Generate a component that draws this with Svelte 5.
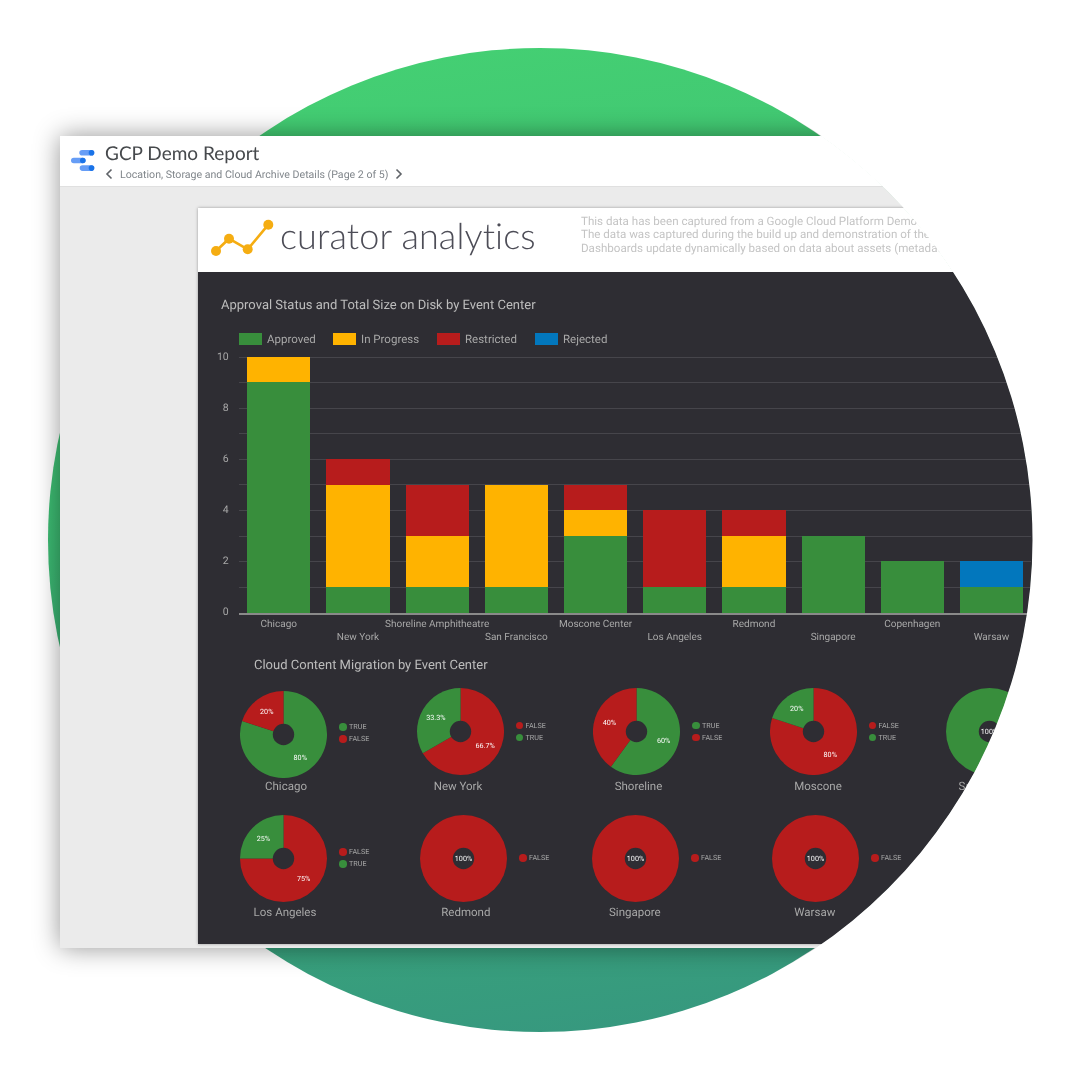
<script>
  const legend = [
    { name: 'Approved', color: '#388e3c', width: 94 },
    { name: 'In Progress', color: '#ffb300', width: 104 },
    { name: 'Restricted', color: '#b71c1c', width: 98 },
    { name: 'Rejected', color: '#0277bd', width: 80 }
  ];

  const colors = { a: '#388e3c', p: '#ffb300', r: '#b71c1c', x: '#0277bd' };

  const bars = [
    { name: 'Chicago', parts: [['a', 9], ['p', 1]] },
    { name: 'New York', parts: [['a', 1], ['p', 4], ['r', 1]] },
    { name: 'Shoreline Amphitheatre', parts: [['a', 1], ['p', 2], ['r', 2]] },
    { name: 'San Francisco', parts: [['a', 1], ['p', 4]] },
    { name: 'Moscone Center', parts: [['a', 3], ['p', 1], ['r', 1]] },
    { name: 'Los Angeles', parts: [['a', 1], ['r', 3]] },
    { name: 'Redmond', parts: [['a', 1], ['p', 2], ['r', 1]] },
    { name: 'Singapore', parts: [['a', 3]] },
    { name: 'Copenhagen', parts: [['a', 2]] },
    { name: 'Warsaw', parts: [['a', 1], ['x', 1]] }
  ];

  const ticks = [10, 8, 6, 4, 2, 0];
  const grid = [1, 2, 3, 4, 5, 6, 7, 8, 9, 10];

  const G = '#388e3c';
  const R = '#b71c1c';

  // each slice: [colour, percent, label, legend name]; dx shifts the caption under the pie
  const rows = [
    [
      { name: 'Chicago', w: 176.5, top: 3, dx: 2.5, slices: [[G, 80, '80%', 'TRUE'], [R, 20, '20%', 'FALSE']] },
      { name: 'New York', w: 176.5, top: 0, dx: -2, slices: [[R, 66.7, '66.7%', 'FALSE'], [G, 33.3, '33.3%', 'TRUE']] },
      { name: 'Shoreline', w: 176.5, top: 0, dx: 2, slices: [[G, 60, '60%', 'TRUE'], [R, 40, '40%', 'FALSE']] },
      { name: 'Moscone', w: 176.5, top: 0, dx: 5, slices: [[R, 80, '80%', 'FALSE'], [G, 20, '20%', 'TRUE']] },
      { name: 'San Francisco', w: 176.5, top: 0, dx: 5, slices: [[G, 100, '100%', 'TRUE']] }
    ],
    [
      { name: 'Los Angeles', w: 180, top: 0, dx: 1.5, slices: [[R, 75, '75%', 'FALSE'], [G, 25, '25%', 'TRUE']] },
      { name: 'Redmond', w: 172, top: 0, dx: 2.3, slices: [[R, 100, '100%', 'FALSE']] },
      { name: 'Singapore', w: 180, top: 0, dx: -0.7, slices: [[R, 100, '100%', 'FALSE']] },
      { name: 'Warsaw', w: 176, top: 0, dx: -0.7, slices: [[R, 100, '100%', 'FALSE']] }
    ]
  ];

  const radius = 43.5;
  const labelRadius = 28.5;

  function point(r, pct) {
    const a = (pct / 100) * Math.PI * 2;
    return [radius + r * Math.sin(a), radius - r * Math.cos(a)];
  }

  function arcs(slices) {
    let from = 0;
    return slices.map(([color, pct, label]) => {
      const [x0, y0] = point(radius, from);
      const [x1, y1] = point(radius, from + pct);
      const mid = pct === 100 ? null : point(labelRadius, from + pct / 2);
      const large = pct > 50 ? 1 : 0;
      const d = `M${radius} ${radius}L${x0} ${y0}A${radius} ${radius} 0 ${large} 1 ${x1} ${y1}Z`;
      from += pct;
      return { color, d, label, full: pct === 100, x: mid ? mid[0] : radius, y: mid ? mid[1] : radius };
    });
  }
</script>

<div class="stage">
  <div class="circle"></div>

  <div class="clip">
    <div class="window">
      <header class="top">
        <svg class="logo" width="24" height="24" viewBox="0 0 24 24">
          <rect x="8.3" y="1" width="15" height="5.6" rx="2.8" fill="#669df6" />
          <circle cx="20.5" cy="3.8" r="2.8" fill="#1a73e8" />
          <rect x="0" y="8.7" width="14.6" height="5.6" rx="2.8" fill="#669df6" />
          <circle cx="11.8" cy="11.5" r="2.8" fill="#1a73e8" />
          <rect x="8.7" y="16.3" width="14.6" height="5.6" rx="2.8" fill="#669df6" />
          <circle cx="20.5" cy="19.1" r="2.8" fill="#1a73e8" />
        </svg>
        <div class="heading">
          <h1>GCP Demo Report</h1>
          <div class="pager">
            <svg width="8" height="12" viewBox="0 0 8 12"><path d="M6.5 1.5 2 6l4.5 4.5" /></svg>
            <span>Location, Storage and Cloud Archive Details (Page 2 of 5)</span>
            <svg width="8" height="12" viewBox="0 0 8 12"><path d="M1.5 1.5 6 6l-4.5 4.5" /></svg>
          </div>
        </div>
      </header>

      <div class="canvas">
        <div class="page">
          <div class="brand">
            <svg class="spark" width="66" height="42" viewBox="0 0 66 42">
              <path d="M7 33 20 20.7 38.7 31.3 59.3 6.7" />
              <circle cx="7" cy="33" r="5" />
              <circle cx="20" cy="20.7" r="5" />
              <circle cx="38.7" cy="31.3" r="5" />
              <circle cx="59.3" cy="6.7" r="5" />
            </svg>
            <div class="wordmark">curator analytics</div>
            <div class="about">
              <div>This data has been captured from a Google Cloud Platform Demo instance.</div>
              <div>The data was captured during the build up and demonstration of the platform.</div>
              <div>Dashboards update dynamically based on data about assets (metadata).</div>
            </div>
          </div>

          <div class="dark">
            <h2 class="chart-title">Approval Status and Total Size on Disk by Event Center</h2>

            <div class="legend">
              {#each legend as item}
                <div class="legend-item" style="width: {item.width}px">
                  <span class="swatch" style="background: {item.color}"></span>
                  <span>{item.name}</span>
                </div>
              {/each}
            </div>

            <div class="chart">
              <div class="axis">
                {#each ticks as t}
                  <span>{t}</span>
                {/each}
              </div>
              <div class="plot">
                <div class="grid">
                  {#each grid as line}
                    <span></span>
                  {/each}
                </div>
                <div class="bars">
                  {#each bars as bar}
                    <div class="band">
                      {#each bar.parts as [key, value]}
                        <div class="part" style="height: {value * 25.6}px; background: {colors[key]}"></div>
                      {/each}
                    </div>
                  {/each}
                </div>
              </div>
            </div>

            <div class="names">
              {#each bars as bar, i}
                <div class="name" class:low={i % 2 === 1}>{bar.name}</div>
              {/each}
            </div>

            <h2 class="pies-title">Cloud Content Migration by Event Center</h2>

            {#each rows as row, r}
              <div class="pie-row" class:second={r === 1}>
                {#each row as tile}
                  <div class="tile" style="width: {tile.w}px">
                    <div class="pie-line">
                      <div class="pie-wrap" style="margin-top: {tile.top}px">
                        <svg width="87" height="87" viewBox="0 0 87 87">
                          {#each arcs(tile.slices) as s}
                            {#if s.full}
                              <circle cx="43.5" cy="43.5" r="43.5" fill={s.color} />
                            {:else}
                              <path d={s.d} fill={s.color} />
                            {/if}
                          {/each}
                          <circle cx="43.5" cy="43.5" r="10.7" fill="#2e2d33" />
                          {#each arcs(tile.slices) as s}
                            <text x={s.x} y={s.y + 2.6}>{s.label}</text>
                          {/each}
                        </svg>
                      </div>
                      <div class="pie-legend" style="margin-top: {tile.top}px">
                        {#each tile.slices as s}
                          <div class="pie-key">
                            <span class="dot" style="background: {s[0]}"></span>
                            <span>{s[3]}</span>
                          </div>
                        {/each}
                      </div>
                    </div>
                    <div class="caption" style="margin-left: {tile.dx}px">{tile.name}</div>
                  </div>
                {/each}
              </div>
            {/each}
          </div>
        </div>
      </div>
    </div>
  </div>
</div>

<style>
  :global(body) {
    margin: 0;
    background: #fff;
  }

  h1,
  h2 {
    margin: 0;
    font-weight: 400;
  }

  .stage {
    position: relative;
    width: 1080px;
    height: 1080px;
    overflow: hidden;
    background: #fff;
    font-family: Roboto, sans-serif;
    text-rendering: geometricPrecision;
  }

  .circle {
    position: absolute;
    left: 48px;
    top: 48px;
    width: 984px;
    height: 984px;
    border-radius: 50%;
    background: linear-gradient(172deg, #45d273 0%, #3cb972 45%, #369580 100%);
  }

  /* window is cut by the circle on its right half, free on the left */
  .clip {
    position: absolute;
    inset: 0;
    padding: 136px 0 0 60px;
    box-sizing: border-box;
    clip-path: path('M0 0H540V47.5A492.5 492.5 0 0 1 540 1032.5V1080H0Z');
  }

  .window {
    width: 1100px;
    height: 812px;
    display: flex;
    flex-direction: column;
    background: #ebebeb;
    box-shadow: 0 0 24px rgba(0, 0, 0, 0.42);
    filter: blur(0.35px);
  }

  .top {
    height: 51px;
    flex: none;
    box-sizing: border-box;
    display: flex;
    align-items: flex-start;
    padding: 0 0 0 11px;
    background: #fff;
    border-bottom: 1px solid #e0e0e0;
  }

  .logo {
    margin-top: 13px;
    flex: none;
  }

  .heading {
    margin-left: 10px;
    padding-top: 6px;
  }

  h1 {
    font-family: Lato, sans-serif;
    font-size: 19px;
    line-height: 24px;
    color: #46494c;
  }

  .pager {
    display: flex;
    align-items: center;
    gap: 7px;
    height: 16px;
    font-size: 10.6px;
    color: #80868b;
    white-space: nowrap;
  }

  .pager path {
    fill: none;
    stroke: #5f6368;
    stroke-width: 1.6;
  }

  .canvas {
    flex: 1;
    padding: 21px 0 0 138px;
  }

  .page {
    width: 962px;
    height: 736px;
    display: flex;
    flex-direction: column;
    box-shadow: 0 0 3px rgba(0, 0, 0, 0.35);
  }

  .brand {
    height: 64px;
    flex: none;
    display: flex;
    background: #fff;
    white-space: nowrap;
  }

  .spark {
    margin: 10px 0 0 11px;
    flex: none;
  }

  .spark path {
    fill: none;
    stroke: #f5ad12;
    stroke-width: 2.6;
  }

  .spark circle {
    fill: #f5ad12;
  }

  .wordmark {
    margin: 3px 0 0 5px;
    width: 301px;
    font-family: Lato, sans-serif;
    font-weight: 300;
    font-size: 36px;
    letter-spacing: 0.12px;
    line-height: 48px;
    color: #4d4d57;
  }

  .about {
    padding-top: 6.5px;
    font-size: 11.6px;
    line-height: 13.7px;
    color: #c4c4c4;
  }

  .dark {
    flex: 1;
    background: #2e2d33;
    padding: 0 0 0 23px;
  }

  .chart-title {
    padding-top: 26px;
    font-size: 13px;
    line-height: 15px;
    color: #bdbdbd;
  }

  .legend {
    display: flex;
    height: 16px;
    margin: 18px 0 0 18px;
    font-size: 11.5px;
    color: #a8a8a8;
  }

  .legend-item {
    display: flex;
    align-items: center;
    gap: 5px;
  }

  .swatch {
    width: 23px;
    height: 12px;
  }

  .chart {
    display: flex;
    margin-top: 9.5px;
  }

  .axis {
    width: 18.2px;
    height: 268px;
    box-sizing: border-box;
    display: flex;
    flex-direction: column;
    align-items: flex-end;
    justify-content: space-between;
    margin: -6px 0;
    padding-right: 10.5px;
    font-size: 10.5px;
    line-height: 12px;
    color: #a8a8a8;
  }

  .plot {
    position: relative;
    width: 792px;
    height: 256px;
    border-bottom: 2px solid #8a8a8a;
    box-sizing: content-box;
  }

  .grid {
    position: absolute;
    inset: 0 0 0 -0.2px;
    display: flex;
    flex-direction: column;
  }

  .grid span {
    height: 25.6px;
    box-sizing: border-box;
    border-top: 1px solid #46454b;
  }

  .bars {
    position: relative;
    display: flex;
    height: 100%;
  }

  .band {
    width: 79.2px;
    box-sizing: border-box;
    padding: 0 8px;
    display: flex;
    flex-direction: column-reverse;
  }

  .names {
    display: flex;
    height: 30px;
    margin: 3.5px 0 0 18.2px;
  }

  .name {
    width: 79.2px;
    flex: none;
    display: flex;
    justify-content: center;
    font-size: 10px;
    line-height: 13px;
    color: #a8a8a8;
    white-space: nowrap;
  }

  .name.low {
    padding-top: 13px;
  }

  .pies-title {
    margin: 10px 0 0 33px;
    font-size: 13px;
    line-height: 16px;
    color: #bdbdbd;
  }

  .pie-row {
    display: flex;
    margin: 14px 0 0 19px;
    height: 100px;
  }

  .pie-row.second {
    margin-top: 26.7px;
  }

  .tile {
    flex: none;
  }

  .pie-line {
    display: flex;
    height: 87px;
  }

  .pie-wrap {
    width: 87px;
    height: 87px;
    flex: none;
  }

  .pie-wrap text {
    fill: #fff;
    font-size: 7.2px;
    text-anchor: middle;
  }

  .pie-legend {
    margin-left: 12px;
    display: flex;
    flex-direction: column;
    justify-content: center;
    gap: 2px;
    font-size: 7.2px;
    line-height: 10px;
    color: #a8a8a8;
  }

  .pie-key {
    display: flex;
    align-items: center;
    gap: 2.5px;
  }

  .dot {
    width: 7.5px;
    height: 7.5px;
    border-radius: 50%;
  }

  .caption {
    width: 87px;
    margin-top: 2.5px;
    display: flex;
    justify-content: center;
    font-size: 11.5px;
    line-height: 16px;
    color: #a8a8a8;
    white-space: nowrap;
  }
</style>
